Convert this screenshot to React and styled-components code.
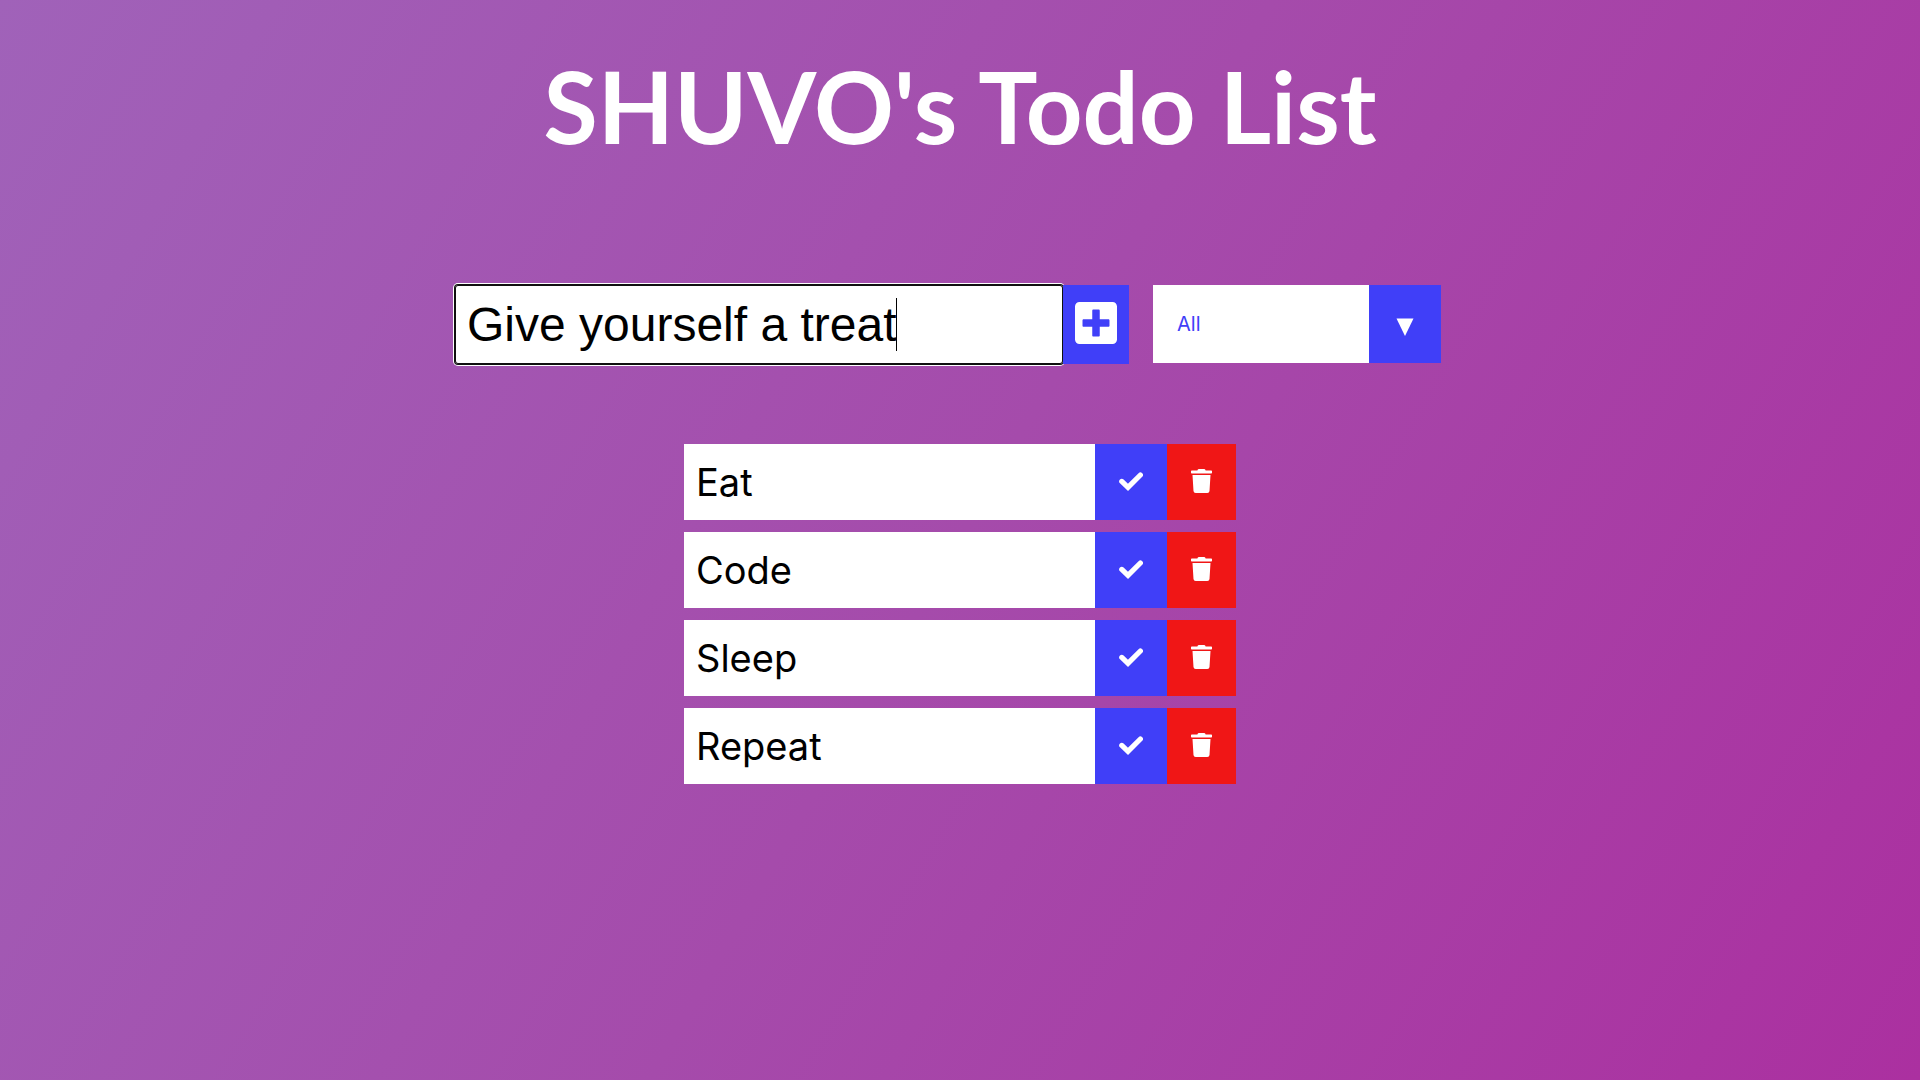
import React, { useLayoutEffect, useRef, useState } from "react";
import styled, { createGlobalStyle } from "styled-components";
import { FaPlusSquare, FaTrash } from "react-icons/fa";

const BLUE = "#403ff8";
const RED = "#f01616";

const GlobalStyle = createGlobalStyle`
  * {
    box-sizing: border-box;
    margin: 0;
    padding: 0;
  }

  body {
    min-height: 100vh;
    background: linear-gradient(120deg, #a062b9, #a54bab 50%, #ab30a0);
    background-attachment: fixed;
    color: white;
    font-family: "Inter", sans-serif;
  }
`;

const Header = styled.header`
  min-height: 20vh;
  display: flex;
  justify-content: center;
  align-items: center;
  padding-bottom: 4px;
`;

const Title = styled.h1`
  font-family: "Lato", "Inter", sans-serif;
  font-size: 99px;
  line-height: 120px;
  font-weight: 700;
`;

const Form = styled.form`
  min-height: 20vh;
  display: flex;
  justify-content: center;
  align-items: center;
`;

const Field = styled.div`
  position: relative;
  display: flex;
  width: 608px;
  height: 79px;
`;

const TodoInput = styled.input`
  flex: 1;
  min-width: 0;
  padding: 12px;
  border: none;
  border-radius: 3px;
  background: white;
  color: black;
  caret-color: transparent;
  font-family: "Liberation Sans", Arial, sans-serif;
  font-size: 48px;
  outline: none;

  &:focus {
    box-shadow: inset 0 0 0 1px #101010, 0 0 0 1px #101010, 0 0 0 2px white;
  }
`;

const Caret = styled.span`
  position: absolute;
  top: 13px;
  bottom: 13px;
  width: 1px;
  background: black;
  pointer-events: none;
`;

const IconButton = styled.button`
  display: flex;
  justify-content: center;
  align-items: center;
  border: none;
  padding: ${(p) => p.$padding};
  background: ${(p) => p.$color};
  color: white;
  font-size: ${(p) => p.$size};
  cursor: pointer;

  svg {
    flex: none;
    width: ${(p) => p.$iconWidth};
    height: 1em;
  }
`;

const AddButton = styled(IconButton)`
  position: relative;
  height: 79px;
`;

const Filter = styled.div`
  display: flex;
  width: 288px;
  height: 78px;
  margin: 0 24px;
  background: white;
`;

const FilterSelect = styled.select`
  flex: 1;
  appearance: none;
  border: none;
  outline: none;
  padding: 0 24px;
  background: white;
  color: ${BLUE};
  font-family: inherit;
  font-size: 20px;
  cursor: pointer;
`;

const Arrow = styled.span`
  flex: 0 0 72px;
  display: flex;
  justify-content: center;
  align-items: center;
  padding-top: 6px;
  background: ${BLUE};
`;

const Main = styled.main`
  display: flex;
  justify-content: center;
`;

const List = styled.ul`
  width: 552px;
  list-style: none;
`;

const Item = styled.li`
  display: flex;
  height: 76px;
  margin: 12px 0;
  background: white;
  color: black;
`;

const ItemText = styled.span`
  flex: 1;
  align-self: center;
  padding: 0 12px;
  font-size: 38px;
  line-height: 54px;
`;

function CheckIcon() {
  return (
    <svg viewBox="0 0 24 24" fill="none" stroke="currentColor" aria-hidden="true">
      <path d="M2.8 12.4L9 18.4L21.4 6" strokeWidth="5.2" strokeLinecap="round" />
    </svg>
  );
}

export default function App() {
  const inputRef = useRef(null);
  const [text, setText] = useState("Give yourself a treat");
  const [focused, setFocused] = useState(true);
  const [caretLeft, setCaretLeft] = useState(12);
  const [filter, setFilter] = useState("all");
  const [todos, setTodos] = useState([
    { id: 1, name: "Eat", done: false },
    { id: 2, name: "Code", done: false },
    { id: 3, name: "Sleep", done: false },
    { id: 4, name: "Repeat", done: false },
  ]);

  const placeCaret = () => {
    const input = inputRef.current;
    const style = getComputedStyle(input);
    const ctx = document.createElement("canvas").getContext("2d");
    ctx.font = `${style.fontSize} ${style.fontFamily}`;
    const before = input.value.slice(0, input.selectionStart);
    const left = parseFloat(style.paddingLeft) + ctx.measureText(before).width;
    setCaretLeft(Math.floor(left - input.scrollLeft));
  };

  useLayoutEffect(() => {
    const input = inputRef.current;
    input.setSelectionRange(input.value.length, input.value.length);
    placeCaret();
  }, []);

  const addTodo = (e) => {
    e.preventDefault();
    if (!text.trim()) return;
    setTodos([...todos, { id: Date.now(), name: text, done: false }]);
    setText("");
    setCaretLeft(12);
  };

  const toggle = (id) =>
    setTodos(todos.map((t) => (t.id === id ? { ...t, done: !t.done } : t)));

  const visible = todos.filter(
    (t) => filter === "all" || t.done === (filter === "completed")
  );

  return (
    <>
      <GlobalStyle />
      <Header>
        <Title>SHUVO's Todo List</Title>
      </Header>
      <Form onSubmit={addTodo}>
        <Field>
          <TodoInput
            ref={inputRef}
            type="text"
            aria-label="New todo"
            autoFocus
            value={text}
            onChange={(e) => setText(e.target.value)}
            onSelect={placeCaret}
            onFocus={() => setFocused(true)}
            onBlur={() => setFocused(false)}
          />
          {focused && <Caret style={{ left: caretLeft }} />}
        </Field>
        <AddButton
          type="submit"
          aria-label="Add"
          $color={BLUE}
          $size="48px"
          $iconWidth="42px"
          $padding="0 12px 2px"
        >
          <FaPlusSquare />
        </AddButton>
        <Filter>
          <FilterSelect
            aria-label="Filter todos"
            value={filter}
            onChange={(e) => setFilter(e.target.value)}
          >
            <option value="all">All</option>
            <option value="completed">Completed</option>
            <option value="uncompleted">Uncompleted</option>
          </FilterSelect>
          <Arrow aria-hidden="true">
            <svg width="18" height="18" viewBox="0 0 18 18" fill="white">
              <path d="M0.5 0.5h17L9 18z" />
            </svg>
          </Arrow>
        </Filter>
      </Form>
      <Main>
        <List>
          {visible.map((t) => (
            <Item key={t.id}>
              <ItemText>{t.name}</ItemText>
              <IconButton
                type="button"
                aria-label={`Complete ${t.name}`}
                $color={BLUE}
                $size="24px"
                $iconWidth="24px"
                $padding="0 24px 2px"
                onClick={() => toggle(t.id)}
              >
                <CheckIcon />
              </IconButton>
              <IconButton
                type="button"
                aria-label={`Delete ${t.name}`}
                $color={RED}
                $size="24px"
                $iconWidth="21px"
                $padding="0 24px 2px"
                onClick={() => setTodos(todos.filter((x) => x.id !== t.id))}
              >
                <FaTrash />
              </IconButton>
            </Item>
          ))}
        </List>
      </Main>
    </>
  );
}
